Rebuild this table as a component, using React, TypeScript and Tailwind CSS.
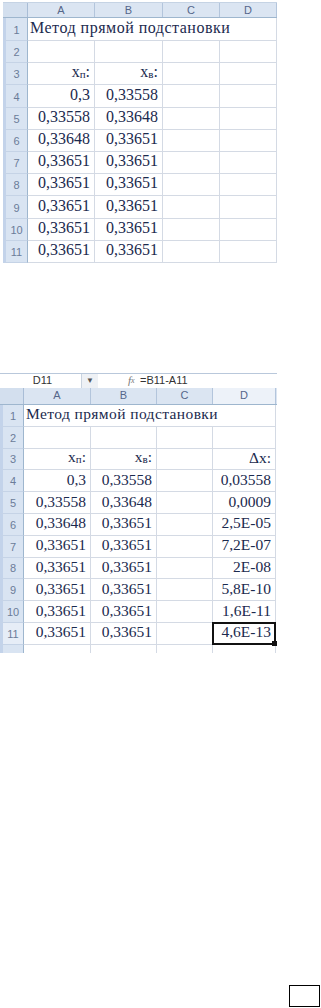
import type { ReactNode } from 'react';

const SERIF = "font-['Liberation_Serif','Times_New_Roman',serif]";
const SANS = "font-['Liberation_Sans',Arial,sans-serif]";

type Row = { n: number; cells: ReactNode[] };

const XP = (
  <span>
    x<span className="text-[11px] align-[-1px]">п</span>:
  </span>
);
const XV = (
  <span>
    x<span className="text-[11px] align-[-1px]">в</span>:
  </span>
);

const firstRows: Row[] = [
  { n: 2, cells: ['', '', '', ''] },
  { n: 3, cells: [XP, XV, '', ''] },
  { n: 4, cells: ['0,3', '0,33558', '', ''] },
  { n: 5, cells: ['0,33558', '0,33648', '', ''] },
  { n: 6, cells: ['0,33648', '0,33651', '', ''] },
  { n: 7, cells: ['0,33651', '0,33651', '', ''] },
  { n: 8, cells: ['0,33651', '0,33651', '', ''] },
  { n: 9, cells: ['0,33651', '0,33651', '', ''] },
  { n: 10, cells: ['0,33651', '0,33651', '', ''] },
  { n: 11, cells: ['0,33651', '0,33651', '', ''] },
];

const secondRows: Row[] = [
  { n: 2, cells: ['', '', '', ''] },
  { n: 3, cells: [XP, XV, '', 'Δx:'] },
  { n: 4, cells: ['0,3', '0,33558', '', '0,03558'] },
  { n: 5, cells: ['0,33558', '0,33648', '', '0,0009'] },
  { n: 6, cells: ['0,33648', '0,33651', '', '2,5E-05'] },
  { n: 7, cells: ['0,33651', '0,33651', '', '7,2E-07'] },
  { n: 8, cells: ['0,33651', '0,33651', '', '2E-08'] },
  { n: 9, cells: ['0,33651', '0,33651', '', '5,8E-10'] },
  { n: 10, cells: ['0,33651', '0,33651', '', '1,6E-11'] },
  { n: 11, cells: ['0,33651', '0,33651', '', '4,6E-13'] },
];

function RowHead({ n, active = false }: { n: number; active?: boolean }) {
  return (
    <div
      className={`flex items-end justify-center border-r border-b border-r-[#9eb6ce] border-b-[#c5d3e6] pb-[4px] ${SANS} text-[11px] leading-none text-[#6b7c99] ${
        active ? 'bg-[#e6edf7]' : 'bg-[#d9e4f2]'
      } border-l-[3px] border-l-[#c3d3ea]`}
    >
      {n}
    </div>
  );
}

function Sheet({
  cols,
  rows,
  rowH,
  titleH,
  headH,
  text,
  pad,
  titleTracking,
  activeCol,
}: {
  cols: string;
  rows: Row[];
  rowH: string;
  titleH: string;
  headH: string;
  text: string;
  pad: string;
  titleTracking: string;
  activeCol?: number;
}) {
  const letters = ['A', 'B', 'C', 'D'];
  return (
    <div className="flex flex-col">
      <div className={`grid ${cols} ${headH} border-b border-[#9eb6ce] bg-[#dbe5f2]`}>
        <div className="border-r border-[#a9bdd6] bg-[#d3dfee]" />
        {letters.map((l, i) => (
          <div
            key={l}
            className={`flex items-center justify-center border-r border-[#b3c5dc] ${SANS} text-[11px] leading-none text-[#55668a] ${
              activeCol === i ? 'bg-[#edf2f9]' : ''
            }`}
          >
            {l}
          </div>
        ))}
      </div>
      <div className={`grid ${cols} ${titleH}`}>
        <RowHead n={1} />
        <div
          className={`col-span-4 flex items-end border-r border-b border-[#d4dae4] pl-[2px] ${pad} ${SERIF} ${text} ${titleTracking} leading-none whitespace-nowrap text-[#1b2a4e]`}
        >
          Метод прямой подстановки
        </div>
      </div>
      {rows.map((r) => (
        <div key={r.n} className={`grid ${cols} ${rowH}`}>
          <RowHead n={r.n} active={activeCol !== undefined && r.n === 11} />
          {r.cells.map((c, i) => {
            const selected = activeCol === i && r.n === 11;
            return (
              <div
                key={i}
                className={`relative flex items-end justify-end border-r border-b border-[#d4dae4] pr-[4px] ${pad} ${SERIF} ${text} leading-none whitespace-nowrap text-[#1b2a4e]`}
              >
                {selected ? (
                  <div className="absolute -top-[1px] -left-[1px] -right-[1px] -bottom-[1px] border-2 border-[#111]">
                    <div className="absolute -right-[3px] -bottom-[3px] h-[5px] w-[5px] bg-[#111]" />
                  </div>
                ) : null}
                {c}
              </div>
            );
          })}
        </div>
      ))}
    </div>
  );
}

function FormulaBar() {
  return (
    <div className={`flex h-[15px] w-[277px] items-stretch border-t border-[#b9c8db] bg-white ${SANS} text-[11px] leading-none text-[#333]`}>
      <div className="flex w-[82px] items-center justify-center border-r border-[#c9d3df] pl-[4px]">D11</div>
      <div className="flex w-[16px] items-center justify-center bg-[#eef1f5] text-[8px] text-[#555]">▼</div>
      <div className="w-[30px]" />
      <div className={`flex w-[12px] items-center ${SERIF} text-[11px] italic text-[#777]`}>
        f<span className="text-[8px]">x</span>
      </div>
      <div className="flex items-center">=B11-A11</div>
    </div>
  );
}

export default function App() {
  return (
    <div className="flex h-[1008px] w-[321px] flex-col bg-white">
      <div className="ml-[3px] mt-[2px] w-[274px] border-t border-[#c5d3e4]">
        <Sheet
          cols="grid-cols-[25px_67px_68px_57px_57px]"
          rows={firstRows}
          rowH="h-[22.2px]"
          titleH="h-[23px]"
          headH="h-[15px]"
          text="text-[16px]"
          pad="pb-[4px]"
          titleTracking="tracking-[0.5px]"
        />
      </div>

      <div className="mt-[110px] w-[277px]">
        <FormulaBar />
        <Sheet
          cols="grid-cols-[24px_67px_66px_56px_63px]"
          rows={secondRows}
          rowH="h-[21.8px]"
          titleH="h-[22px]"
          headH="h-[17px]"
          text="text-[15.5px]"
          pad="pb-[4px]"
          titleTracking="tracking-[0.4px]"
          activeCol={3}
        />
        <div className="grid h-[8px] grid-cols-[24px_67px_66px_56px_63px]">
          <div className="border-r border-[#9eb6ce] border-l-[3px] border-l-[#c3d3ea] bg-[#d9e4f2]" />
          <div className="border-r border-[#d4dae4]" />
          <div className="border-r border-[#d4dae4]" />
          <div className="border-r border-[#d4dae4]" />
          <div className="border-r border-[#d4dae4]" />
        </div>
      </div>

      <div className="mt-auto mb-[1px] mr-[1px] h-[22px] w-[31px] self-end border border-black" />
    </div>
  );
}
